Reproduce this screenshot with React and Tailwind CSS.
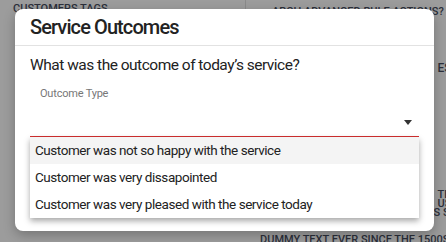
import React from 'react'

const options = [
  'Customer was not so happy with the service',
  'Customer was very dissapointed',
  'Customer was very pleased with the service today',
]

const App = () => {
  return (
    <div className="relative w-[446px] h-[242px] overflow-hidden bg-[#9c9c9c] font-['Roboto',sans-serif]">
      {/* page behind the overlay */}
      <div className="flex h-full">
        <div className="w-[12px] bg-gradient-to-r from-[#858585] to-[#929292]" />
        <div className="flex-1 flex flex-col text-[#2b2f3a] text-[11px] font-medium uppercase">
          <div className="flex h-[14px] items-end">
            <div className="w-[246px] pl-[13px] leading-none border-r border-[#8a8a8a] h-full flex items-end">Customers Tags</div>
            <div className="pl-[26px] leading-none -mb-[3px]">Arch advanced rule actions?</div>
          </div>
          <div className="flex justify-end mt-[48px] text-[12px] leading-none">
            <span className="w-[12px] overflow-hidden whitespace-nowrap">ES</span>
          </div>
          <div className="flex-1" />
          <div className="flex flex-col items-end text-[11px] leading-[9px] whitespace-nowrap">
            <span className="w-[12px] overflow-hidden">TEXT</span>
            <span className="w-[12px] overflow-hidden">UST</span>
            <span className="w-[16px] overflow-hidden">S ST</span>
          </div>
          <div className="pl-[260px] mt-[17px] text-[11px] leading-none whitespace-nowrap h-[8px]">Dummy text ever since the 1500s</div>
        </div>
      </div>

      {/* dialog */}
      <div className="absolute left-[15px] top-[9px] w-[419px] h-[222px] rounded-[8px] bg-white shadow-[0_4px_12px_rgba(0,0,0,0.25)]">
        <div className="h-[37px] px-[15px] flex items-center border-b border-[#e2e2e2]">
          <h2 className="text-[20px] font-medium tracking-[-0.9px] text-[#222] leading-none">Service Outcomes</h2>
        </div>
        <div className="px-[15px]">
          <p className="pt-[9px] text-[15.5px] tracking-[-0.5px] leading-[20px] text-[#222]">What was the outcome of today’s service?</p>
          <div className="mt-[11px] h-[51px] relative border-b-[1.5px] border-[#d32f2f] flex flex-col">
            <span className="pl-[10px] pt-[1px] text-[11px] tracking-[-0.2px] leading-[14px] text-[#777]">Outcome Type</span>
            <div className="flex-1 flex items-center justify-end pr-[7px] pt-[8px]">
              <svg width="8" height="5" viewBox="0 0 8 5">
                <path d="M0 0 L8 0 L4 5 Z" fill="#333" />
              </svg>
            </div>
          </div>
        </div>

        {/* dropdown menu */}
        <ul className="absolute left-[15px] top-[128px] w-[389px] bg-white shadow-[0_3px_6px_rgba(0,0,0,0.35)]">
          {options.map((opt, i) => (
            <li
              key={opt}
              className={`h-[27px] flex items-center pl-[5px] text-[13.5px] tracking-[-0.45px] text-[#222] ${i === 0 ? 'bg-[#f4f4f4]' : ''}`}
            >
              {opt}
            </li>
          ))}
        </ul>
      </div>
    </div>
  )
}

export default App
